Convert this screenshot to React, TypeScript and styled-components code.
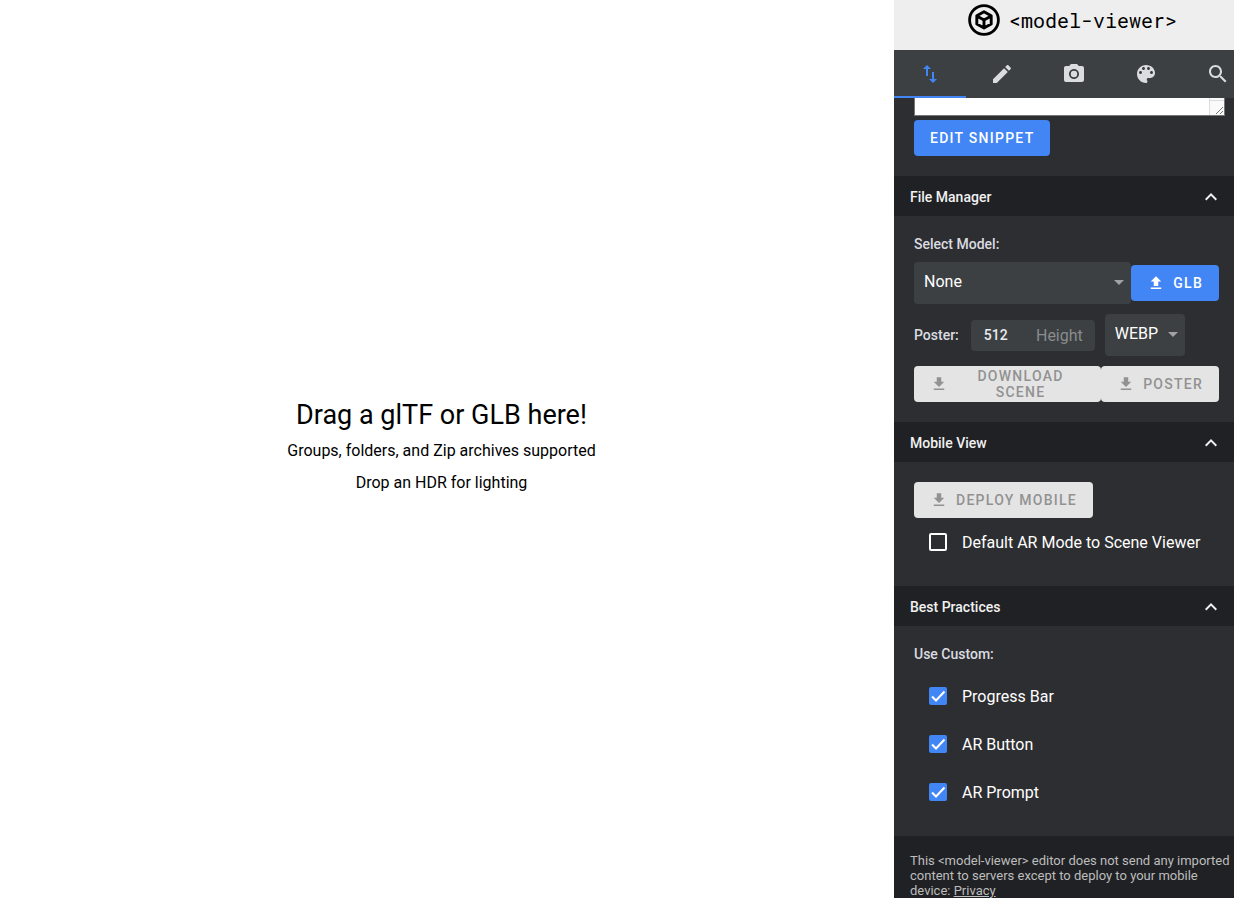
import React from 'react';
import styled, { createGlobalStyle } from 'styled-components';

const GlobalStyle = createGlobalStyle`
  *, *::before, *::after { box-sizing: border-box; }
  body { margin: 0; background: #fff; font-family: Roboto, "Liberation Sans", sans-serif; }
  button, input, select, textarea { font-family: inherit; }
`;

const Editor = styled.div`
  display: grid;
  grid-template-columns: minmax(0, 1fr) 340px;
  height: 100vh;
`;

const DropZone = styled.main`
  display: flex;
  flex-direction: column;
  align-items: center;
  justify-content: center;
  padding-right: 11px;
  color: #000;
  text-align: center;
`;

const DropTitle = styled.h1`
  margin: 0 0 4px;
  font-size: 27px;
  line-height: 32px;
  font-weight: 400;
`;

const DropHint = styled.p`
  margin: 0;
  font-size: 16px;
  line-height: 32px;
`;

const Panel = styled.aside`
  display: flex;
  flex-direction: column;
  min-height: 0;
  overflow: hidden;
  background: #2d2e31;
  color: #fff;
`;

const Brand = styled.header`
  display: flex;
  flex: none;
  align-items: center;
  justify-content: center;
  gap: 9px;
  height: 50px;
  padding: 0 0 10px 17px;
  background: #eee;
  color: #000;
`;

const BrandName = styled.span`
  font-family: "Roboto Mono", "Liberation Mono", monospace;
  font-size: 20px;
  line-height: 24px;
`;

const Tabs = styled.nav`
  display: flex;
  flex: none;
  overflow: hidden;
  background: #3c4043;
`;

const Tab = styled.button<{ $active?: boolean }>`
  display: flex;
  flex: 0 0 72px;
  align-items: center;
  justify-content: center;
  height: 48px;
  padding: 0;
  border: 0;
  background: none;
  box-shadow: ${(p) => (p.$active ? 'inset 0 -2px #4285f4' : 'none')};
  color: ${(p) => (p.$active ? '#4285f4' : '#dadce0')};
`;

const Content = styled.div`
  flex: 1;
  min-height: 0;
  overflow: hidden;
`;

const Snippet = styled.div`
  padding: 0 9px 20px 20px;
`;

const SnippetBox = styled.div`
  position: relative;
  margin-bottom: 4px;
`;

const SnippetText = styled.textarea`
  display: block;
  width: 100%;
  height: 18px;
  padding: 0;
  border: 1px solid #767676;
  border-top: 0;
  background: #fff;
  resize: none;
  overflow: hidden;
`;

const Grip = styled.svg`
  position: absolute;
  right: 1px;
  bottom: 1px;
`;

const SectionHeader = styled.h2`
  margin: 0;
`;

const SectionToggle = styled.button`
  display: flex;
  align-items: center;
  justify-content: space-between;
  width: 100%;
  height: 40px;
  padding: 1px 11px 0 16px;
  border: 0;
  background: #202124;
  color: #f1f1f1;
  font-size: 14px;
  line-height: 16px;
  font-weight: 500;
`;

const SectionBody = styled.div`
  display: flex;
  flex-direction: column;
  gap: 10px;
  padding: 20px 15px 20px 20px;
`;

const Caption = styled.label`
  color: #dadce0;
  font-size: 14px;
  line-height: 16px;
  font-weight: 500;
`;

const Row = styled.div`
  display: flex;
  align-items: center;
`;

const Button = styled.button`
  display: inline-flex;
  flex: none;
  align-items: center;
  justify-content: center;
  gap: 8px;
  height: 36px;
  padding: 0 16px;
  border: 0;
  border-radius: 4px;
  background: #4285f4;
  color: #fff;
  font-size: 14px;
  line-height: 16px;
  font-weight: 500;
  letter-spacing: 0.09em;
  text-transform: uppercase;

  &:disabled {
    background: #e4e4e4;
    color: #929292;
  }
`;

const WideButton = styled(Button)`
  flex: 1;
`;

const ButtonText = styled.span`
  flex: 1;
`;

const SelectWrap = styled.div<{ $width?: string }>`
  position: relative;
  flex: ${(p) => (p.$width ? `0 0 ${p.$width}` : '1')};
`;

const Select = styled.select`
  display: block;
  width: 100%;
  height: 42px;
  padding: 0 24px 3px 10px;
  border: 0;
  border-radius: 4px;
  background: #3c4043;
  color: #fff;
  font-size: 16px;
  appearance: none;
`;

const Caret = styled.svg`
  position: absolute;
  top: 18px;
  right: 7px;
  pointer-events: none;
`;

const HeightField = styled.label`
  display: flex;
  align-items: center;
  justify-content: space-between;
  width: 124px;
  height: 31px;
  margin: 0 10px 0 12px;
  padding: 0 12px 0 13px;
  border-radius: 4px;
  background: #3c4043;
  color: #8a8c8e;
  font-size: 16px;
`;

const HeightInput = styled.input`
  width: 40px;
  padding: 0;
  border: 0;
  background: none;
  color: #e8eaed;
  font-size: 14px;
  font-weight: 500;
`;

const Checks = styled.div`
  display: flex;
  flex-direction: column;
`;

const CheckLabel = styled.label`
  display: flex;
  align-items: center;
  gap: 15px;
  height: 48px;
  padding-left: 15px;
  color: #fff;
  font-size: 16px;
  line-height: 21px;
  font-weight: 400;
`;

const CheckBox = styled.span`
  position: relative;
  width: 18px;
  height: 18px;

  svg {
    position: absolute;
    inset: 0;
    pointer-events: none;
  }
`;

const CheckInput = styled.input`
  display: block;
  width: 18px;
  height: 18px;
  margin: 0;
  border: 2px solid #fff;
  border-radius: 2px;
  appearance: none;

  &:checked {
    border-color: #4285f4;
    background: #4285f4;
  }
`;

const Footer = styled.footer`
  padding: 17px 0 0 16px;
  background: #202124;
  color: #bdbdbd;
  font-size: 13px;
  line-height: 15px;

  a { display: inline-block; color: inherit; text-decoration: underline; }
`;

const icons = {
  importExport: 'M9 3L5 6.99h3V14h2V6.99h3L9 3zm7 14.01V10h-2v7.01h-3L15 21l4-3.99h-3z',
  edit: 'M3 17.25V21h3.75L17.81 9.94l-3.75-3.75L3 17.25zM20.71 7.04c.39-.39.39-1.02 0-1.41l-2.34-2.34c-.39-.39-1.02-.39-1.41 0l-1.83 1.83 3.75 3.75 1.83-1.83z',
  camera: 'M12 8.8a3.2 3.2 0 1 0 0 6.4 3.2 3.2 0 1 0 0-6.4zM9 2L7.17 4H4c-1.1 0-2 .9-2 2v12c0 1.1.9 2 2 2h16c1.1 0 2-.9 2-2V6c0-1.1-.9-2-2-2h-3.17L15 2H9zm3 15c-2.76 0-5-2.24-5-5s2.24-5 5-5 5 2.24 5 5-2.24 5-5 5z',
  palette: 'M12 3c-4.97 0-9 4.03-9 9s4.03 9 9 9c.83 0 1.5-.67 1.5-1.5 0-.39-.15-.74-.39-1.01-.23-.26-.38-.61-.38-.99 0-.83.67-1.5 1.5-1.5H16c2.76 0 5-2.24 5-5 0-4.42-4.03-8-9-8zm-5.5 9c-.83 0-1.5-.67-1.5-1.5S5.67 9 6.5 9 8 9.67 8 10.5 7.33 12 6.5 12zm3-4C8.67 8 8 7.33 8 6.5S8.67 5 9.5 5s1.5.67 1.5 1.5S10.33 8 9.5 8zm5 0c-.83 0-1.5-.67-1.5-1.5S13.67 5 14.5 5s1.5.67 1.5 1.5S15.33 8 14.5 8zm3 4c-.83 0-1.5-.67-1.5-1.5S16.67 9 17.5 9s1.5.67 1.5 1.5-.67 1.5-1.5 1.5z',
  search: 'M15.5 14h-.79l-.28-.27C15.41 12.59 16 11.11 16 9.5 16 5.91 13.09 3 9.5 3S3 5.91 3 9.5 5.91 16 9.5 16c1.61 0 3.09-.59 4.23-1.57l.27.28v.79l5 4.99L20.49 19l-4.99-5zm-6 0C7.01 14 5 11.99 5 9.5S7.01 5 9.5 5 14 7.01 14 9.5 11.99 14 9.5 14z',
  expandLess: 'M12 8l-6 6 1.41 1.41L12 10.83l4.59 4.58L18 14z',
  upload: 'M9 16h6v-6h4l-7-7-7 7h4zm-4 2h14v2H5z',
  download: 'M19 9h-4V3H9v6H5l7 7 7-7zM5 18v2h14v-2H5z',
};

type IconName = keyof typeof icons;

const Icon = ({ name, size = 24 }: { name: IconName; size?: number }) => (
  <svg width={size} height={size} viewBox="0 0 24 24" fill="currentColor" aria-hidden="true">
    <path d={icons[name]} />
  </svg>
);

const Logo = () => (
  <svg width="32" height="32" viewBox="0 0 32 32" fill="none" stroke="#000" strokeLinejoin="round" aria-hidden="true">
    <circle cx="16" cy="16" r="14.4" strokeWidth="2.8" />
    <path d="M16 7.8l7.2 4v8.3l-7.2 4-7.2-4v-8.3zM8.8 11.9l7.2 4 7.2-4M16 15.9V24" strokeWidth="2.9" />
  </svg>
);

const DownCaret = () => (
  <Caret width="10" height="5" viewBox="0 0 10 5" fill="#a0a2a4" aria-hidden="true">
    <path d="M0 0h10L5 5z" />
  </Caret>
);

const Section = ({ title, children }: { title: string; children: React.ReactNode }) => (
  <section>
    <SectionHeader>
      <SectionToggle aria-expanded="true">
        {title}
        <Icon name="expandLess" />
      </SectionToggle>
    </SectionHeader>
    <SectionBody>{children}</SectionBody>
  </section>
);

const Check = ({ label, checked }: { label: string; checked?: boolean }) => (
  <CheckLabel>
    <CheckBox>
      <CheckInput type="checkbox" defaultChecked={checked} />
      {checked && (
        <svg width="18" height="18" viewBox="0 0 18 18" fill="none" stroke="#fff" strokeWidth="2" aria-hidden="true">
          <path d="M3 9.5l4 4 8.5-9" />
        </svg>
      )}
    </CheckBox>
    {label}
  </CheckLabel>
);

const tabs: { icon: IconName; label: string }[] = [
  { icon: 'importExport', label: 'Import and export' },
  { icon: 'edit', label: 'Edit' },
  { icon: 'camera', label: 'Camera' },
  { icon: 'palette', label: 'Materials' },
  { icon: 'search', label: 'Inspector' },
];

export default function App() {
  return (
    <>
      <GlobalStyle />
      <Editor>
        <DropZone>
          <DropTitle>Drag a glTF or GLB here!</DropTitle>
          <DropHint>Groups, folders, and Zip archives supported</DropHint>
          <DropHint>Drop an HDR for lighting</DropHint>
        </DropZone>
        <Panel>
          <Brand>
            <Logo />
            <BrandName>&lt;model-viewer&gt;</BrandName>
          </Brand>
          <Tabs>
            {tabs.map((tab, i) => (
              <Tab key={tab.icon} $active={i === 0} aria-label={tab.label}>
                <Icon name={tab.icon} />
              </Tab>
            ))}
          </Tabs>
          <Content>
            <Snippet>
              <SnippetBox>
                <SnippetText aria-label="Snippet" />
                <Grip width="15" height="17" viewBox="0 0 15 17" aria-hidden="true">
                  <path d="M0 0h15v17H0z" fill="#fafafa" />
                  <path d="M.5 0v17M0 2.5h15" stroke="#dcdcdc" />
                  <path d="M7 16l7-7M11 16l3-3" stroke="#777" />
                </Grip>
              </SnippetBox>
              <Button>Edit Snippet</Button>
            </Snippet>
            <Section title="File Manager">
              <Caption htmlFor="model">Select Model:</Caption>
              <Row>
                <SelectWrap>
                  <Select id="model">
                    <option>None</option>
                  </Select>
                  <DownCaret />
                </SelectWrap>
                <Button>
                  <Icon name="upload" size={18} />
                  GLB
                </Button>
              </Row>
              <Row>
                <Caption htmlFor="poster-height">Poster:</Caption>
                <HeightField>
                  <HeightInput id="poster-height" defaultValue="512" />
                  Height
                </HeightField>
                <SelectWrap $width="80px">
                  <Select aria-label="Poster format">
                    <option>WEBP</option>
                  </Select>
                  <DownCaret />
                </SelectWrap>
              </Row>
              <Row>
                <WideButton disabled>
                  <Icon name="download" size={18} />
                  <ButtonText>Download Scene</ButtonText>
                </WideButton>
                <Button disabled>
                  <Icon name="download" size={18} />
                  Poster
                </Button>
              </Row>
            </Section>
            <Section title="Mobile View">
              <Checks>
                <Row>
                  <Button disabled>
                    <Icon name="download" size={18} />
                    Deploy Mobile
                  </Button>
                </Row>
                <Check label="Default AR Mode to Scene Viewer" />
              </Checks>
            </Section>
            <Section title="Best Practices">
              <Caption as="span">Use Custom:</Caption>
              <Checks>
                <Check label="Progress Bar" checked />
                <Check label="AR Button" checked />
                <Check label="AR Prompt" checked />
              </Checks>
            </Section>
            <Footer>
              This &lt;model-viewer&gt; editor does not send any imported content to servers except to deploy to your
              mobile device: <a href="#privacy">Privacy</a>
            </Footer>
          </Content>
        </Panel>
      </Editor>
    </>
  );
}
